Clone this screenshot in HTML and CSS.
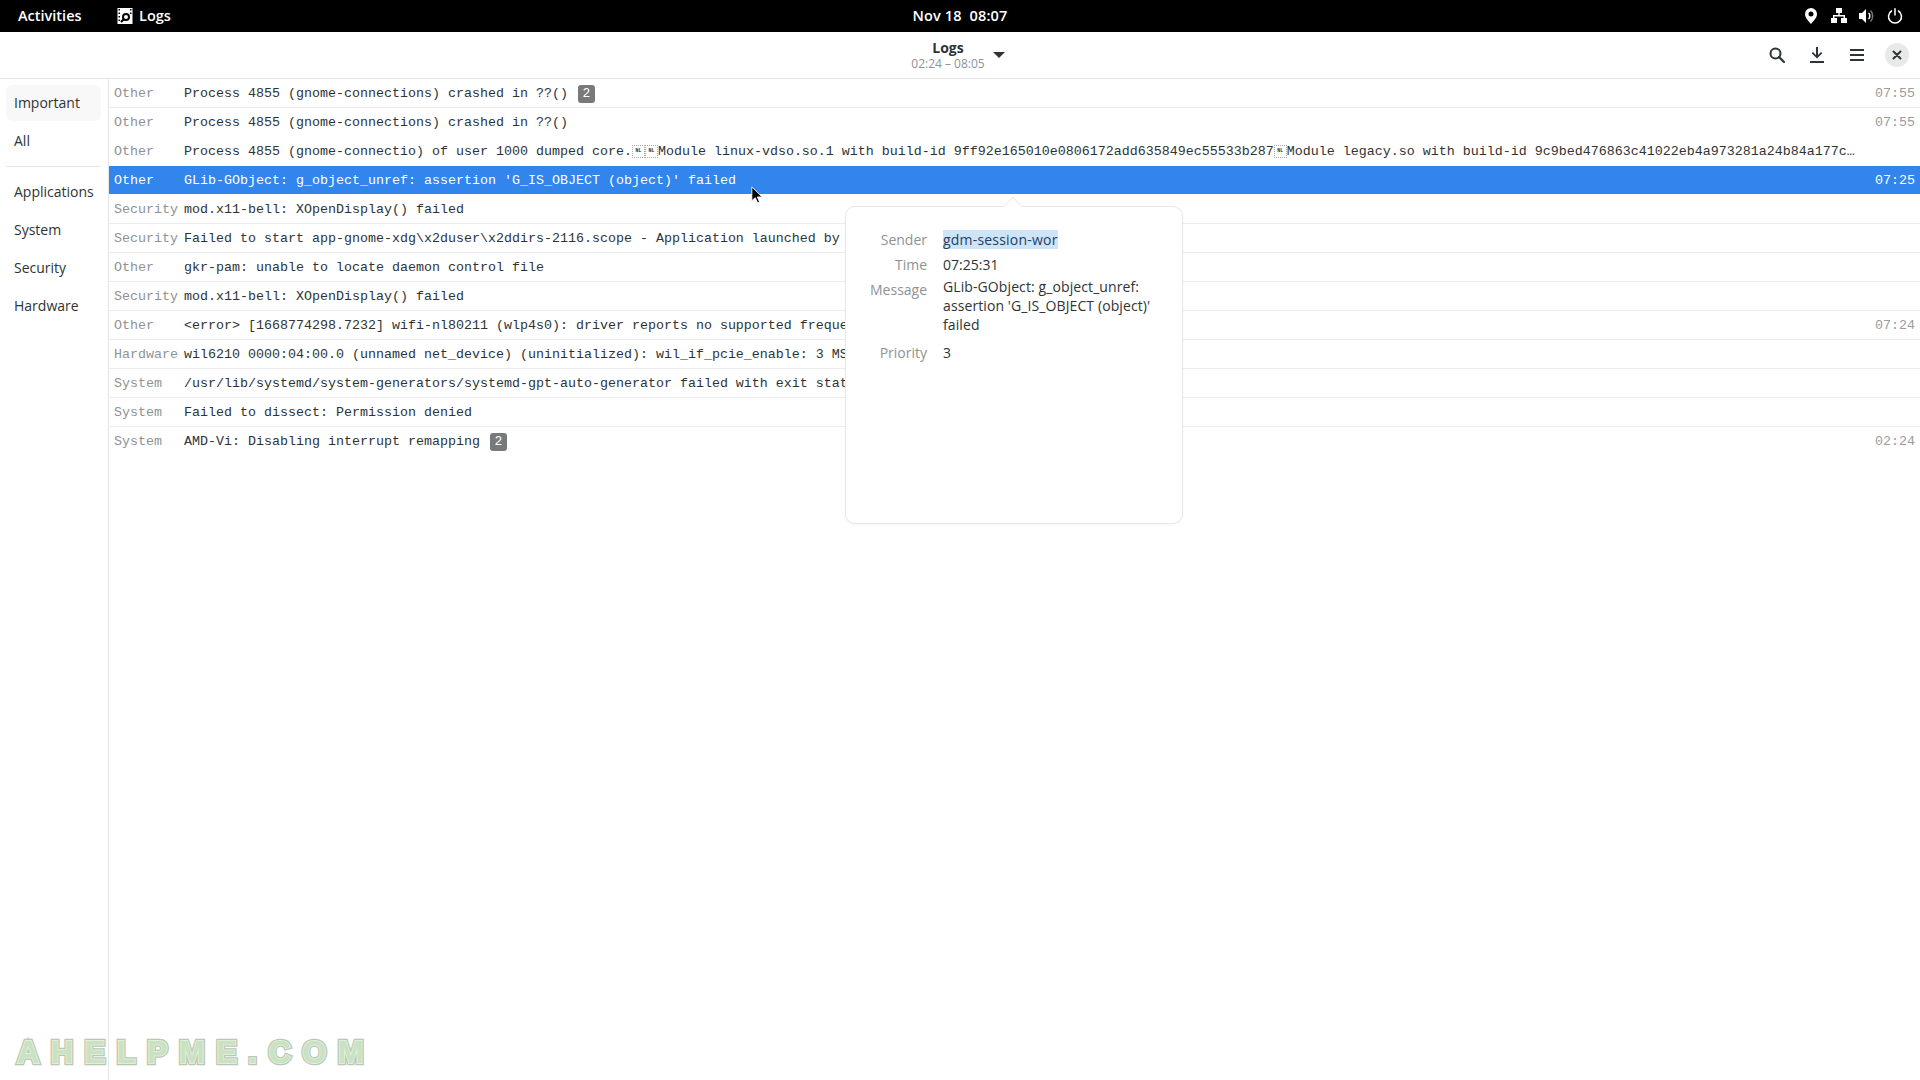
FILE: index.html
```html
<!DOCTYPE html>
<html lang="en">
<head>
<meta charset="utf-8">
<title>Logs</title>
<link rel="stylesheet" href="styles.css">
</head>
<body>
<div class="topbar">
  <div class="top-left">
    <span class="activities">Activities</span>
    <span class="app-menu">
      <svg class="app-icon" viewBox="0 0 16 16"><rect x="0.500" y="0" width="15" height="16" fill="#fff"/><path fill="#000" d="M1.500 1h1.500v1.500H1.500zM1.500 4.500h1.500V6H1.500zM1.500 8h1.500v1.500H1.500zM1.500 11.500h1.500V13H1.500zM13 1h1.500v1.500H13zM13 4.500h1.500V6H13z"/><circle cx="9" cy="9" r="3" fill="none" stroke="#000" stroke-width="2"/><path d="M6.800 11.200 4 14" stroke="#000" stroke-width="2.200"/></svg>
      <span>Logs</span>
    </span>
  </div>
  <div class="clock">Nov 18&nbsp; 08:07</div>
  <div class="top-right">
    <svg class="tray" viewBox="0 0 16 16"><path fill="#fff" fill-rule="evenodd" d="M8 0a6 6 0 0 0-6 6c0 4 4 7.500 6 10 2-2.500 6-6 6-10a6 6 0 0 0-6-6zm0 3.500a2.500 2.500 0 1 1 0 5 2.500 2.500 0 0 1 0-5z"/></svg>
    <svg class="tray" viewBox="0 0 16 16"><path fill="#fff" d="M5 0h6v5H5zM0 10h6v5H0zM10 10h6v5h-6zM7.300 5h1.400v2H14v3h-1.400V8.400H3.400V10H2V7h5.300z"/></svg>
    <svg class="tray" viewBox="0 0 16 16"><path fill="#fff" d="M0 5h3l4-4v14l-4-4H0z"/><path fill="none" stroke="#fff" stroke-width="1.500" d="M9.500 5a4 4 0 0 1 0 6"/><path fill="none" stroke="#777" stroke-width="1.500" d="M11.500 2.500a8 8 0 0 1 0 11"/></svg>
    <svg class="tray" viewBox="0 0 16 16"><path fill="none" stroke="#fff" stroke-width="1.500" stroke-linecap="round" d="M4.500 3a6.500 6.500 0 1 0 7 0M8 .8V7"/></svg>
  </div>
</div>

<header class="header">
  <div></div>
  <div class="title-group">
    <div class="title-text">
      <div class="title">Logs</div>
      <div class="subtitle">02:24 – 08:05</div>
    </div>
    <span class="caret"></span>
  </div>
  <div class="header-actions">
    <span class="action">
      <svg class="action-icon" viewBox="0 0 16 16"><circle cx="6.500" cy="6.500" r="5" fill="none" stroke="#2e3436" stroke-width="2"/><path d="M10 10l5 5" stroke="#2e3436" stroke-width="2.200" stroke-linecap="round"/></svg>
    </span>
    <span class="action">
      <svg class="action-icon" viewBox="0 0 16 16"><path fill="#2e3436" d="M7 0h2v8l3-3 1.300 1.300L8 11.600 2.700 6.300 4 5l3 3zM1 14h14v2H1z"/></svg>
    </span>
    <span class="action">
      <svg class="action-icon" viewBox="0 0 16 16"><path fill="#2e3436" d="M1 2h14v2H1zM1 7h14v2H1zM1 12h14v2H1z"/></svg>
    </span>
    <span class="action close">
      <svg class="close-icon" viewBox="0 0 10 10"><path d="M1.500 1.500l7 7M8.500 1.500l-7 7" stroke="#2e3436" stroke-width="2" stroke-linecap="round"/></svg>
    </span>
  </div>
</header>

<div class="main">
  <nav class="sidebar">
    <div class="side-item active">Important</div>
    <div class="side-item">All</div>
    <div class="side-sep"></div>
    <div class="side-item">Applications</div>
    <div class="side-item">System</div>
    <div class="side-item">Security</div>
    <div class="side-item">Hardware</div>
  </nav>
  <div class="list">
    <div class="row"><span class="cat">Other</span><span class="msg">Process 4855 (gnome-connections) crashed in ??()<span class="badge">2</span></span><span class="time">07:55</span></div>
    <div class="row no-line"><span class="cat">Other</span><span class="msg">Process 4855 (gnome-connections) crashed in ??()</span><span class="time">07:55</span></div>
    <div class="row no-line"><span class="cat">Other</span><span class="msg">Process 4855 (gnome-connectio) of user 1000 dumped core.<span class="nl">NL</span><span class="nl">NL</span>Module linux-vdso.so.1 with build-id 9ff92e165010e0806172add635849ec55533b287<span class="nl">NL</span>Module legacy.so with build-id 9c9bed476863c41022eb4a973281a24b84a177c…</span></div>
    <div class="row selected"><span class="cat">Other</span><span class="msg">GLib-GObject: g_object_unref: assertion 'G_IS_OBJECT (object)' failed</span><span class="time">07:25</span></div>
    <div class="row"><span class="cat">Security</span><span class="msg">mod.x11-bell: XOpenDisplay() failed</span></div>
    <div class="row"><span class="cat">Security</span><span class="msg">Failed to start app-gnome-xdg\x2duser\x2ddirs-2116.scope - Application launched by</span></div>
    <div class="row"><span class="cat">Other</span><span class="msg">gkr-pam: unable to locate daemon control file</span></div>
    <div class="row"><span class="cat">Security</span><span class="msg">mod.x11-bell: XOpenDisplay() failed</span></div>
    <div class="row"><span class="cat">Other</span><span class="msg">&lt;error&gt; [1668774298.7232] wifi-nl80211 (wlp4s0): driver reports no supported freque</span><span class="time">07:24</span></div>
    <div class="row"><span class="cat">Hardware</span><span class="msg">wil6210 0000:04:00.0 (unnamed net_device) (uninitialized): wil_if_pcie_enable: 3 MS</span></div>
    <div class="row"><span class="cat">System</span><span class="msg">/usr/lib/systemd/system-generators/systemd-gpt-auto-generator failed with exit stat</span></div>
    <div class="row"><span class="cat">System</span><span class="msg">Failed to dissect: Permission denied</span></div>
    <div class="row no-line"><span class="cat">System</span><span class="msg">AMD-Vi: Disabling interrupt remapping<span class="badge">2</span></span><span class="time">02:24</span></div>
  </div>
</div>

<div class="popover">
  <span class="pop-arrow"></span>
  <div class="pop-grid">
    <div class="pop-label">Sender</div><div class="pop-value"><span class="sel-text">gdm-session-wor</span></div>
    <div class="pop-label">Time</div><div class="pop-value">07:25:31</div>
    <div class="pop-label">Message</div><div class="pop-value pop-message">GLib-GObject: g_object_unref: assertion 'G_IS_OBJECT (object)' failed</div>
    <div class="pop-label">Priority</div><div class="pop-value">3</div>
  </div>
</div>

<svg class="cursor" viewBox="0 0 14 22"><path d="M1 1v16l4-3.500 2.600 6 2.400-1-2.600-5.800H13z" fill="#000" stroke="#fff" stroke-width="1"/></svg>

<div class="watermark" data-text="AHELPME.COM">AHELPME.COM</div>
</body>
</html>
```
FILE: styles.css
```css
* { box-sizing: border-box; }
html, body { margin: 0; height: 100%; }
body {
  width: 1920px;
  height: 1080px;
  overflow: hidden;
  position: relative;
  display: flex;
  flex-direction: column;
  background: #fff;
  color: #2e3436;
  font-family: "Open Sans", "Noto Sans", sans-serif;
  font-size: 14px;
}

/* Shell top bar */
.topbar {
  height: 32px;
  flex: none;
  background: #000;
  color: #fff;
  display: grid;
  grid-template-columns: 1fr auto 1fr;
  align-items: center;
  font-size: 14.500px;
  font-weight: 600;
  padding-bottom: 1px;
}
.top-left { display: flex; align-items: center; padding-left: 18px; }
.activities { width: 99px; }
.app-menu { display: flex; align-items: center; gap: 6px; }
.app-icon { width: 16px; height: 16px; }
.clock { letter-spacing: .15px; }
.top-right { display: flex; justify-content: flex-end; align-items: center; gap: 12px; padding-right: 17px; }
.tray { width: 16px; height: 16px; display: block; }

/* Header bar */
.header {
  height: 47px;
  flex: none;
  border-bottom: 1px solid #e6e6e6;
  display: grid;
  grid-template-columns: 1fr auto 1fr;
  align-items: center;
}
.title-group { display: flex; align-items: center; gap: 8px; padding-right: 4px; }
.title-text { text-align: center; line-height: 1; }
.title { font-weight: 700; font-size: 14px; line-height: 16px; }
.subtitle { font-size: 12px; line-height: 15px; color: #8f9294; }
.caret {
  width: 0; height: 0;
  border-left: 6px solid transparent;
  border-right: 6px solid transparent;
  border-top: 6px solid #2e3436;
}
.header-actions { display: flex; justify-content: flex-end; align-items: center; gap: 16px; padding-right: 11px; }
.action { width: 24px; height: 24px; display: flex; align-items: center; justify-content: center; }
.action-icon { width: 16px; height: 16px; }
.close { background: #e9e9e9; border-radius: 50%; }
.close-icon { width: 10px; height: 10px; }

/* Main area */
.main { flex: 1; display: flex; min-height: 0; }
.sidebar {
  width: 109px;
  flex: none;
  border-right: 1px solid #e6e6e6;
  padding: 6px 7px 0 6px;
  display: flex;
  flex-direction: column;
  gap: 2px;
}
.side-item {
  height: 36px;
  line-height: 36px;
  padding-left: 8px;
  border-radius: 6px;
  white-space: nowrap;
}
.side-item.active { background: #f8f8f8; }
.side-sep { height: 1px; background: #e6e6e6; margin: 5px 0; }

.list { flex: 1; min-width: 0; font-family: "Liberation Mono", "DejaVu Sans Mono", monospace; font-size: 13.330px; }
.row {
  height: 29px;
  display: flex;
  align-items: center;
  padding: 1px 5px 0;
  border-bottom: 1px solid #ececec;
  white-space: nowrap;
}
.row.no-line { border-bottom-color: transparent; }
.row.selected { background: #3285ec; color: #fff; border-bottom-color: #fff; }
.cat { width: 70px; flex: none; color: #8f9294; }
.selected .cat, .selected .time { color: #fff; }
.msg { min-width: 0; overflow: hidden; display: flex; align-items: center; }
.time { flex: none; margin-left: auto; color: #9a9c9e; padding-left: 8px; }
.badge {
  width: 17px;
  height: 18px;
  margin-left: 10px;
  border-radius: 3px;
  background: #77797b;
  color: #fff;
  font-size: 13px;
  line-height: 18px;
  text-align: center;
}
.nl {
  display: inline-block;
  width: 13px;
  height: 13px;
  border: 1px dotted #aaa;
  font-size: 5px;
  line-height: 11px;
  font-weight: 700;
  text-align: center;
  flex: none;
  overflow: hidden;
}

/* Popover */
.popover {
  position: absolute;
  left: 845px;
  top: 206px;
  width: 338px;
  height: 318px;
  background: #fff;
  border: 1px solid #e8e8e8;
  border-radius: 10px;
  box-shadow: 0 1px 3px rgba(0,0,0,.04);
  padding: 23px 24px 0 24px;
}
.pop-arrow {
  position: absolute;
  left: 158px;
  top: -9px;
  width: 18px;
  height: 18px;
  background: #fff;
  border-left: 1px solid #e8e8e8;
  border-top: 1px solid #e8e8e8;
  transform: rotate(45deg) scale(.8);
}
.pop-grid {
  display: grid;
  grid-template-columns: 57px 1fr;
  column-gap: 16px;
  row-gap: 6px;
  font-size: 14px;
  line-height: 19px;
}
.pop-label { color: #8f9294; text-align: right; }
.pop-value { color: #2e3436; }
.pop-message { margin-top: -3px; padding-bottom: 3px; letter-spacing: .1px; }
.sel-text { background: #cde4fa; letter-spacing: .2px; color: #24405e; }

.cursor { position: absolute; left: 751px; top: 186px; width: 12px; height: 19px; }

/* Watermark */
.watermark {
  position: absolute;
  left: 17px;
  top: 1035px;
  z-index: 0;
  font-family: "Liberation Sans", sans-serif;
  font-weight: 700;
  font-size: 31px;
  line-height: 36px;
  letter-spacing: 11.400px;
  color: #c9e2c1;
  -webkit-text-stroke: 2px #e2eedd;
  paint-order: stroke fill;
}
.watermark::before {
  content: attr(data-text);
  position: absolute;
  left: 0;
  top: 0;
  z-index: -1;
  -webkit-text-stroke: 4.500px #bac7b4;
}
```
